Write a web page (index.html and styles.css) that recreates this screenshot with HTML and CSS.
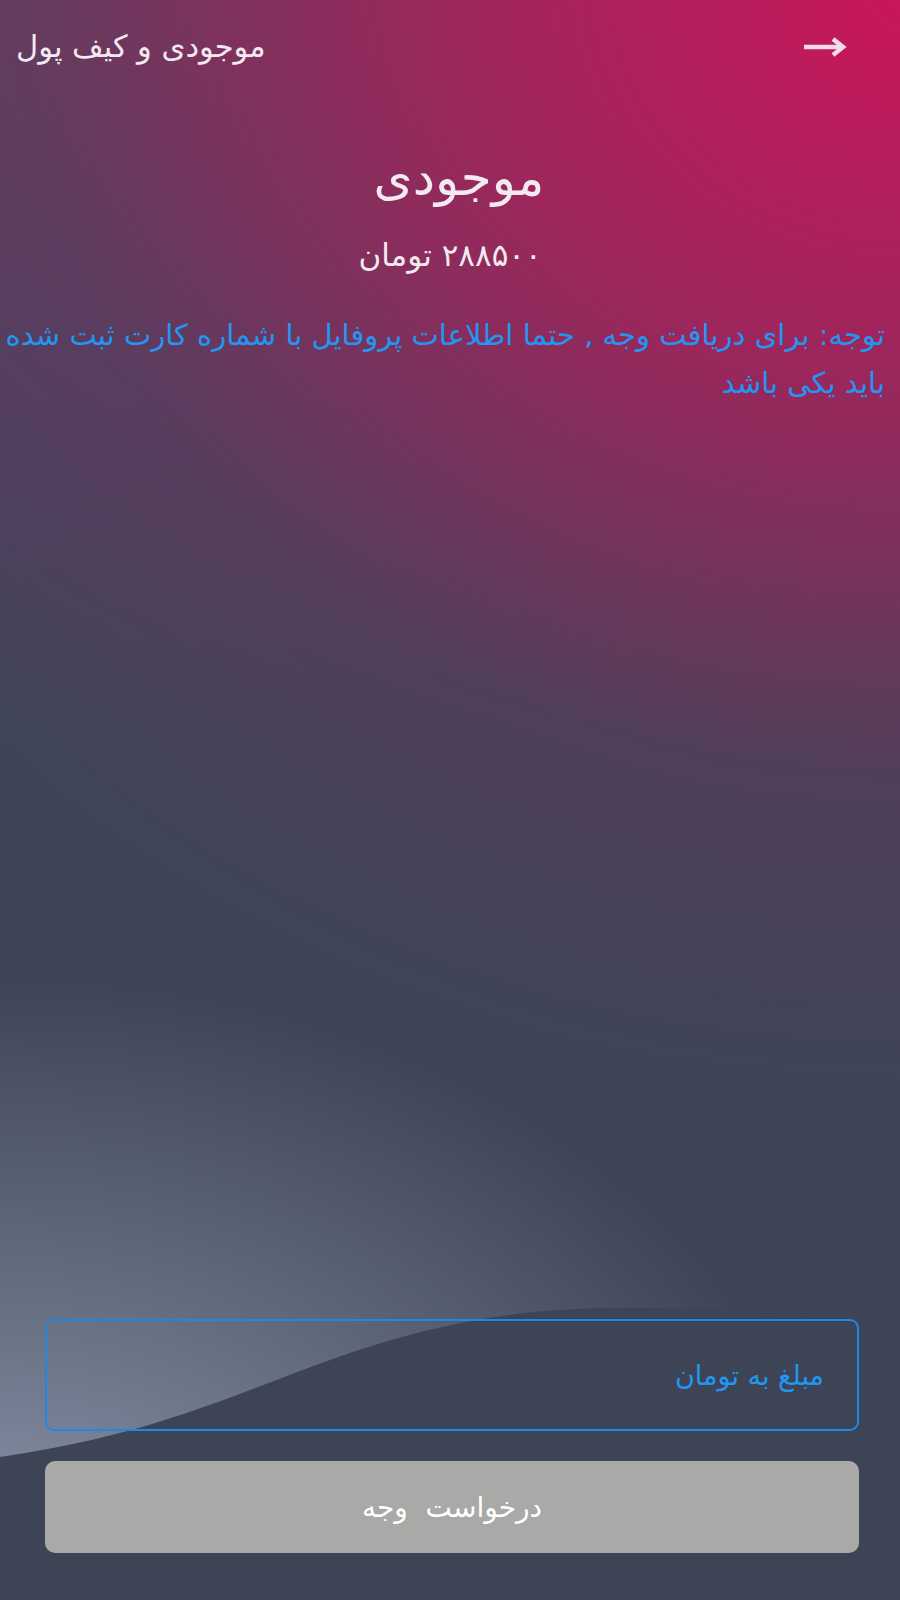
FILE: index.html
```html
<!DOCTYPE html>
<html lang="fa">
<head>
<meta charset="utf-8">
<title>موجودی و کیف پول</title>
<link rel="stylesheet" href="styles.css">
</head>
<body>
<div class="screen">
  <svg class="wave" viewBox="0 0 900 1600" preserveAspectRatio="none" aria-hidden="true">
    <path d="M0,1457 C150,1435 220,1400 330,1360 C440,1320 530,1308 620,1308 C740,1308 840,1318 900,1332 L900,1600 L0,1600 Z" fill="#3d4456"/>
  </svg>
  <header class="appbar">
    <div class="appbar-title">موجودی و کیف پول</div>
    <svg class="back" width="48" height="24" viewBox="0 0 48 24" aria-hidden="true">
      <path d="M2 12 H40" stroke="#f1dbe9" stroke-width="4.5" fill="none"/>
      <path d="M31 4 L41 12 L31 20" stroke="#f1dbe9" stroke-width="4.5" fill="none" stroke-linejoin="miter"/>
    </svg>
  </header>
  <main class="content">
    <h1 class="balance-title">موجودی</h1>
    <div class="balance-amount" dir="rtl">۲۸۸۵۰۰ تومان</div>
    <p class="notice" dir="rtl">توجه: برای دریافت وجه , حتما اطلاعات پروفایل با شماره کارت ثبت شده باید یکی باشد</p>
  </main>
  <form class="form" dir="rtl">
    <div class="field">
      <span class="placeholder">مبلغ به تومان</span>
    </div>
    <button type="button" class="submit">درخواست&nbsp; وجه</button>
  </form>
</div>
</body>
</html>
```
FILE: styles.css
```css
* { box-sizing: border-box; }
html, body { margin: 0; padding: 0; }
body {
  width: 900px;
  height: 1600px;
  overflow: hidden;
  font-family: "DejaVu Sans", "Noto Sans", sans-serif;
}
.screen {
  position: relative;
  width: 900px;
  height: 1600px;
  display: flex;
  flex-direction: column;
  background:
    radial-gradient(ellipse 1250px 1100px at 100% 0%, rgba(200, 22, 92, 1) 0%, rgba(180, 30, 90, 0.75) 35%, rgba(120, 50, 90, 0.32) 70%, rgba(62, 68, 86, 0) 100%),
    radial-gradient(ellipse 840px 620px at 0% 100%, #939bb0 0%, rgba(124, 132, 153, 0.9) 30%, rgba(62, 68, 86, 0) 100%),
    linear-gradient(180deg, #5a4060 0%, #4a4260 25%, #3e4558 45%, #3d4456 100%);
}
.wave {
  position: absolute;
  left: 0;
  top: 0;
  width: 900px;
  height: 1600px;
}
.appbar {
  position: relative;
  height: 92px;
  display: flex;
  align-items: center;
  justify-content: space-between;
  padding: 0 50px 0 16px;
}
.appbar-title {
  color: #f3e9f0;
  font-size: 30.5px;
  direction: rtl;
}
.back { display: block; margin-top: 2px; }
.content {
  position: relative;
  flex: 1;
  display: flex;
  flex-direction: column;
  align-items: center;
}
.balance-title {
  margin: 51px 0 0;
  font-size: 50px;
  font-weight: normal;
  color: #f3e9f0;
  line-height: 70px;
  padding-left: 18px;
}
.balance-amount {
  margin-top: 22px;
  font-size: 31px;
  color: #f3e9f0;
  line-height: 40px;
}
.notice {
  align-self: stretch;
  margin: 36px 15px 0 5px;
  color: #2196f3;
  font-size: 29px;
  line-height: 48px;
  text-align: right;
}
.form {
  position: relative;
  display: flex;
  flex-direction: column;
  gap: 30px;
  padding: 0 41px 47px 45px;
}
.field {
  height: 112px;
  border: 2.5px solid #1e88e5;
  border-radius: 9px;
  display: flex;
  align-items: center;
  padding-right: 33px;
}
.placeholder {
  color: #2196f3;
  font-size: 27px;
}
.submit {
  height: 92px;
  border: none;
  border-radius: 10px;
  background: #a9a9a7;
  color: #ffffff;
  font-family: "DejaVu Sans", sans-serif;
  font-size: 28px;
}
```
